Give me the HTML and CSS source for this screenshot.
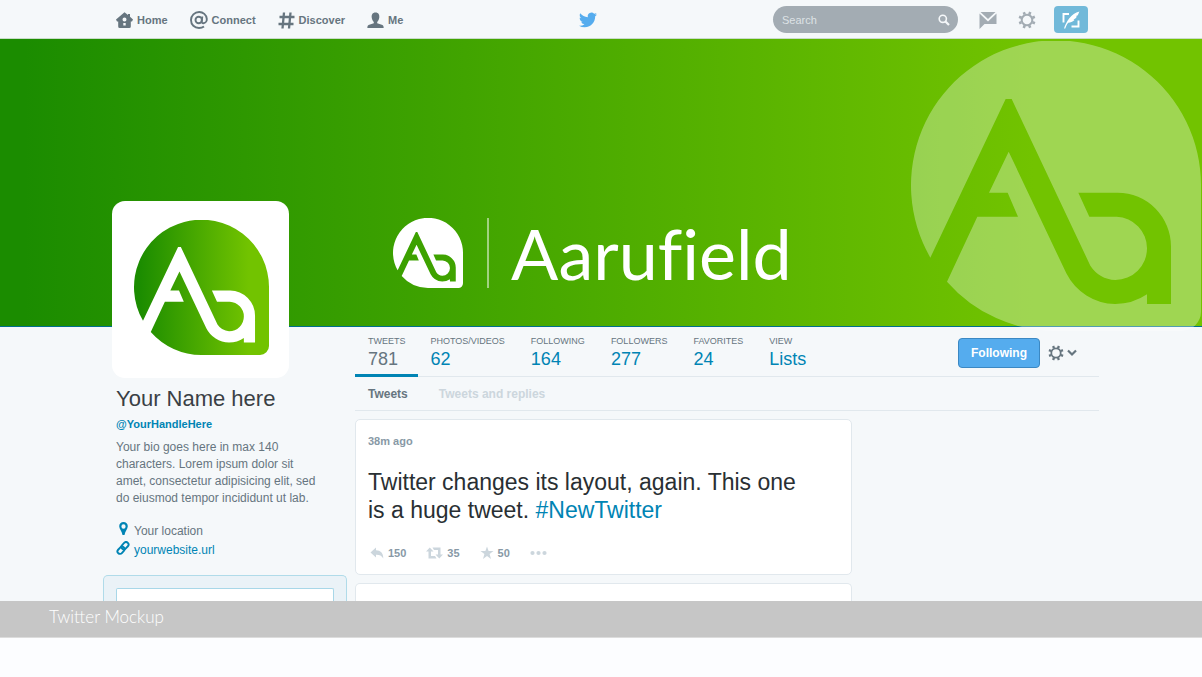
FILE: index.html
```
<!DOCTYPE html>
<html lang="en">

<head>
    <meta charset="UTF-8">
    <meta name="viewport" content="width=device-width, initial-scale=1.0">
    <title>Twitter Mockup</title>
    <link rel="stylesheet" href="styles.css">
</head>

<body>
    <!-- shared shapes -->
    <svg class="defs" width="0" height="0" aria-hidden="true">
        <defs>
            <linearGradient id="green" x1="0" x2="1" y1="0" y2="0">
                <stop offset="0.04" stop-color="#1b8c00" />
                <stop offset="0.85" stop-color="#72c300" />
            </linearGradient>
            <symbol id="mark" viewBox="33 18 870 870">
                <path d="M91 668L317 192H335L571 692A96 96 0 0 0 646 735A95 95 0 0 0 741 640A95 95 0 0 0 650 545H568L535 473H653A160 162 0 0 1 813 635V807H741V778A170 170 0 0 1 645 807A167 167 0 0 1 499 715L326 350L267 473H323L354 545H232L141 740A435 435 0 0 0 468 888H845A58 58 0 0 0 903 830V453A435 435 0 1 0 91 668Z" />
            </symbol>
            <symbol id="gear" viewBox="0 0 18 18">
                <circle cx="9" cy="9" r="5.3" fill="none" stroke="currentColor" stroke-width="2" />
                <path d="M9 0.4V3.2M9 14.8V17.6M0.4 9H3.200M14.8 9H17.6M3 3L4.8 4.8M13.2 13.2L15 15M3 15L4.8 13.2M13.2 4.8L15 3" transform="rotate(22.5 9 9)" fill="none" stroke="currentColor" stroke-width="2.6" />
            </symbol>
        </defs>
    </svg>

    <header class="topbar">
        <div class="wrap topbar-inner">
            <nav class="menu">
                <a href="#"><svg width="17" height="17" viewBox="0 0 17 17"><path fill-rule="evenodd" d="M8.500 0.300L12 3V2H14V4.700L17 7.500L16 9.400H14.800V14.500Q14.800 16 13.300 16H3.700Q2.200 16 2.200 14.500V9.400H1L0 7.500ZM8.500 5.500A2 2 0 0 0 8.500 9.500A2 2 0 0 0 8.500 5.500ZM7.300 11V13.500H9.700V11Z" /></svg>Home</a>
                <a href="#"><svg width="18" height="18" viewBox="0 0 18 18"><g fill="none" stroke="currentColor" stroke-width="1.900"><circle cx="8.700" cy="9" r="3.200" /><path d="M12.300 5.500L11.700 10.500Q11.800 12.300 13.400 12.200C15.500 12 17 10 16.800 7.800C16.500 3.800 13 1 9.200 1C4.600 1 1 4.500 1 9C1 13.800 4.500 17 9 17Q12 17 14 15.500" /></g></svg>Connect</a>
                <a href="#"><svg width="17" height="17" viewBox="0 0 17 17"><path d="M6 0.500L4.500 16.500M12.500 0.500L11 16.500M1.500 5H16.500M0.500 12H15.500" fill="none" stroke="currentColor" stroke-width="2.300" /></svg>Discover</a>
                <a href="#"><svg width="17" height="17" viewBox="0 0 17 17"><path d="M8.500 0.500C11.500 0.500 12.600 2.800 12.300 5.500C12 7.800 11 9.300 10.200 10V11.200L15.500 13Q16.700 13.500 16.700 16H0.300Q0.300 13.500 1.500 13L6.800 11.200V10C6 9.300 5 7.800 4.700 5.500C4.400 2.800 5.500 0.500 8.500 0.500Z" /></svg>Me</a>
            </nav>

            <a class="bird" href="#" aria-label="Twitter">
                <svg width="18" height="18" viewBox="0 0 24 24"><path d="M23.950 4.570a10 10 0 0 1-2.820 0.770 4.960 4.960 0 0 0 2.160-2.720c-0.950 0.550-2 0.960-3.130 1.180a4.920 4.920 0 0 0-8.380 4.480C7.690 8.090 4.070 6.130 1.640 3.160a4.820 4.820 0 0 0-0.670 2.480c0 1.710 0.870 3.210 2.190 4.100a4.900 4.900 0 0 1-2.230-0.620v0.060a4.920 4.920 0 0 0 3.950 4.830 5 5 0 0 1-2.210 0.080 4.940 4.940 0 0 0 4.600 3.420A9.870 9.870 0 0 1 0 19.540a14 14 0 0 0 7.550 2.210c9.050 0 14-7.500 14-13.980 0-0.210 0-0.420-0.020-0.630a9.940 9.940 0 0 0 2.420-2.570Z" /></svg>
            </a>

            <div class="tools">
                <form class="search">
                    <input type="text" placeholder="Search" aria-label="Search">
                    <button type="button" aria-label="Go"><svg width="12" height="12" viewBox="0 0 12 12"><g fill="none" stroke="#f5f8fa" stroke-width="1.600"><circle cx="4.800" cy="4.800" r="3.600" /><path d="M7.500 7.500L11 11" stroke-width="2.200" /></g></svg></button>
                </form>
                <button class="tool" type="button" aria-label="Messages"><svg width="18" height="18" viewBox="0 0 18 18"><path d="M1.500 1H16.500L9 8Z" /><path d="M0.500 2.500L9 10.500L17.500 2.500V13H5.500L0.500 18Z" /></svg></button>
                <button class="tool" type="button" aria-label="Settings"><svg width="18" height="18"><use href="#gear" /></svg></button>
                <button class="compose" type="button" aria-label="Compose"><svg width="18" height="18" viewBox="0 0 18 18"><path d="M7 3H1.500V11.500M9.500 15.500H16.500V9.500" fill="none" stroke="#fff" stroke-width="1.900" /><path d="M2 17.500C4 11 9 2.500 17.500 0.500C16.500 2 16.700 3 15.500 4.500L14 5L14.800 5.700C13.800 7.500 13 8 11.500 8.300L12.500 9C10.500 11 8.500 11.500 6.200 11.800C4.800 13.500 4 15.500 3.300 17.500Z" fill="#fff" /></svg></button>
            </div>
        </div>
    </header>

    <div class="cover">
        <div class="wrap brand">
            <svg class="brand-mark"><use href="#mark" /></svg>
            <span class="brand-line"></span>
            <h1>Aarufield</h1>
        </div>
        <svg class="cover-mark"><use href="#mark" /></svg>
    </div>

    <div class="content">
        <div class="wrap page">
            <aside class="side">
                <div class="avatar">
                    <svg width="135" height="135"><use href="#mark" fill="url(#green)" /></svg>
                </div>
                <div class="profile">
                    <h2>Your Name here</h2>
                    <a class="handle" href="#">@YourHandleHere</a>
                    <p class="bio">Your bio goes here in max 140 characters. Lorem ipsum dolor sit amet, consectetur adipisicing elit, sed do eiusmod tempor incididunt ut lab.</p>
                    <p class="meta"><svg width="14" height="14" viewBox="0 0 14 14"><path fill-rule="evenodd" d="M7.500 0C10 0 11.800 1.800 11.800 4.300C11.800 7 9 9.500 8.500 13H6.500C6 9.500 3.200 7 3.200 4.300C3.200 1.800 5 0 7.500 0ZM7.500 2.200A2.100 2.300 0 0 0 7.500 6.800A2.100 2.300 0 0 0 7.500 2.200Z" /></svg>Your location</p>
                    <p class="meta"><svg width="14" height="14" viewBox="0 0 14 14"><g fill="none" stroke="currentColor" stroke-width="1.900"><rect x="5" y="2.200" width="8" height="5" rx="2.500" transform="rotate(-48 9 4.700)" /><rect x="1" y="6.800" width="8" height="5" rx="2.500" transform="rotate(-48 5 9.300)" /></g></svg><a href="#">yourwebsite.url</a></p>
                </div>
                <div class="panel">
                    <div class="panel-box"></div>
                </div>
            </aside>

            <main class="main">
                <div class="stats">
                    <ul>
                        <li class="current"><a href="#">TWEETS <b>781</b></a></li>
                        <li><a href="#">PHOTOS/VIDEOS <b>62</b></a></li>
                        <li><a href="#">FOLLOWING <b>164</b></a></li>
                        <li><a href="#">FOLLOWERS <b>277</b></a></li>
                        <li><a href="#">FAVORITES <b>24</b></a></li>
                        <li><a href="#">VIEW <b>Lists</b></a></li>
                    </ul>
                    <div class="actions">
                        <button class="follow" type="button">Following</button>
                        <button class="options" type="button" aria-label="Options"><svg width="16" height="16"><use href="#gear" /></svg><svg width="10" height="8" viewBox="0 0 10 8"><path d="M1 1.500L5 5.500L9 1.500" fill="none" stroke="currentColor" stroke-width="2.200" /></svg></button>
                    </div>
                </div>
                <div class="tabs">
                    <a class="current" href="#">Tweets</a>
                    <a href="#">Tweets and replies</a>
                </div>

                <article class="tweet">
                    <time>38m ago</time>
                    <p>Twitter changes its layout, again. This one is a huge tweet. <a href="#">#NewTwitter</a></p>
                    <div class="tweet-actions">
                        <button type="button"><svg width="14" height="12" viewBox="0 0 14 12"><path d="M6 0.500V3.300C10.500 3.300 13.300 6 13.300 11.500C11.500 8.500 9.500 7.700 6 7.800V10.500L0.500 5.500Z" /></svg>150</button>
                        <button type="button"><svg width="17" height="12" viewBox="0 0 17 12"><path d="M3.800 0.500L7.500 4.500H5V9H9L10.500 11.500H2.500V4.500H0ZM6.500 0.500H14.500V7.500H17L13.300 11.500L9.500 7.500H12V3H8Z" /></svg>35</button>
                        <button type="button"><svg width="14" height="14" viewBox="0 0 14 14"><path d="M7 0.500L8.600 5H13.500L9.600 8L11 13L7 10L3 13L4.400 8L0.500 5H5.400Z" /></svg>50</button>
                        <button type="button" aria-label="More"><svg width="17" height="6" viewBox="0 0 17 6"><circle cx="2.500" cy="3" r="2.100" /><circle cx="8.500" cy="3" r="2.100" /><circle cx="14.500" cy="3" r="2.100" /></svg></button>
                    </div>
                </article>
                <article class="tweet tweet-next"></article>
            </main>
        </div>
    </div>

    <footer class="caption">Twitter Mockup</footer>
</body>

</html>
```

FILE: styles.css
```
* {
    box-sizing: border-box;
    margin: 0;
    padding: 0;
}

body {
    background: #fcfdff;
    font-family: "Liberation Sans", Arial, sans-serif;
    font-size: 12px;
    color: #66757f;
}

a {
    color: #0084b4;
    text-decoration: none;
}

ul {
    list-style: none;
}

button {
    border: 0;
    background: none;
    font: inherit;
    color: inherit;
    cursor: pointer;
}

svg {
    display: block;
    flex: none;
    fill: currentColor;
}

.defs {
    position: absolute;
}

.wrap {
    width: 100%;
    max-width: 996px;
    margin: 0 auto;
}

/* top bar */
.topbar {
    background: #f5f8fa;
    border-bottom: 1px solid #c8dcc8;
}

.topbar-inner {
    display: flex;
    align-items: center;
    justify-content: space-between;
    height: 38px;
    padding: 0 11px 0 13px;
}

.menu {
    display: flex;
    gap: 22px;
    padding-top: 2px;
    font-size: 11px;
    font-weight: bold;
}

.menu a {
    display: flex;
    align-items: center;
    gap: 4px;
    color: #66757f;
}

.bird {
    padding-top: 2px;
    color: #55acee;
}

.tools {
    display: flex;
    align-items: center;
    gap: 21px;
    padding-top: 1px;
    color: #a3acb3;
}

.search {
    display: flex;
    align-items: center;
    width: 185px;
    height: 27px;
    padding: 0 8px 0 9px;
    border-radius: 14px;
    background: #a3acb3;
}

.search input {
    flex: 1;
    min-width: 0;
    border: 0;
    outline: 0;
    background: none;
    font-family: inherit;
    font-size: 11px;
    color: #fff;
}

.search input::placeholder {
    color: #dde2e5;
}

.compose {
    display: flex;
    align-items: center;
    justify-content: center;
    width: 34px;
    height: 27px;
    margin-left: -3px;
    border-radius: 4px;
    background: #71b9d9;
}

/* cover */
.cover {
    position: relative;
    height: 288px;
    border-bottom: 1px solid #00708c;
    background: linear-gradient(to right, #1b8c00 2%, #72c300 86%);
    color: #fff;
}

.brand {
    display: flex;
    align-items: center;
    padding: 179px 0 0 290px;
}

.brand-mark {
    width: 70px;
    height: 70px;
}

.brand-line {
    width: 2px;
    height: 70px;
    margin: 0 22px 0 24px;
    background: rgba(255, 255, 255, 0.5);
}

.brand h1 {
    font-family: Lato, sans-serif;
    font-size: 70px;
    font-weight: 400;
    font-variant-ligatures: none;
    line-height: 70px;
}

.cover-mark {
    position: absolute;
    top: 2px;
    right: 1px;
    width: 290px;
    height: 290px;
    opacity: 0.32;
}

/* profile column */
.content {
    background: #f5f8fa;
}

.page {
    display: flex;
}

.side {
    display: flex;
    flex-direction: column;
    flex: none;
    width: 252px;
}

.avatar {
    position: relative;
    width: 177px;
    height: 177px;
    margin: -126px 0 0 9px;
    padding: 19px 20px 23px 22px;
    border-radius: 13px;
    background: #fff;
}

.profile {
    width: 222px;
    padding: 7px 0 15px 13px;
}

.profile h2 {
    font-size: 22px;
    font-weight: 400;
    line-height: 28px;
    color: #3a4045;
}

.handle {
    display: block;
    font-size: 11px;
    font-weight: bold;
    line-height: 22px;
}

.bio {
    margin: 4px 0 15px;
    line-height: 17px;
}

.meta {
    display: flex;
    gap: 4px;
    line-height: 19px;
}

.meta svg {
    color: #0084b4;
}

.panel {
    flex: 1;
    margin-right: 8px;
    padding: 12px;
    padding-bottom: 0;
    border: 1px solid #b0dbe9;
    border-bottom: 0;
    border-radius: 5px 5px 0 0;
    background: #eaf2f7;
}

.panel-box {
    height: 13px;
    border: 1px solid #a8d7e8;
    border-bottom: 0;
    border-radius: 2px 2px 0 0;
    background: #fff;
}

/* timeline */
.main {
    flex: 1;
    min-width: 0;
}

.stats {
    display: flex;
    justify-content: space-between;
    height: 50px;
    border-bottom: 1px solid #e1e8ed;
}

.stats ul {
    display: flex;
}

.stats li {
    height: 50px;
    padding: 9px 13px 0;
    font-size: 9px;
    line-height: 10px;
}

.stats li.current {
    padding-right: 12px;
    border-bottom: 3px solid #0084b4;
}

.stats li a {
    color: #66757f;
}

.stats b {
    display: block;
    font-size: 18px;
    font-weight: 400;
    line-height: 26px;
    color: #0084b4;
}

.stats .current b {
    color: #66757f;
}

.actions {
    display: flex;
    align-items: center;
    gap: 8px;
    padding: 3px 22px 0 0;
}

.follow {
    height: 30px;
    padding: 0 12px;
    border: 1px solid #3b88c3;
    border-radius: 4px;
    background: #55acee;
    font-weight: bold;
    color: #fff;
}

.options {
    display: flex;
    align-items: center;
    gap: 3px;
}

.tabs {
    display: flex;
    gap: 31px;
    padding: 1px 0 0 13px;
    border-bottom: 1px solid #e1e8ed;
    font-weight: bold;
    line-height: 32px;
}

.tabs a {
    color: #ccd6dd;
}

.tabs .current {
    color: #66757f;
}

.tweet {
    max-width: 497px;
    margin-top: 8px;
    padding: 14px 12px;
    border: 1px solid #e1e8ed;
    border-radius: 5px;
    background: #fff;
    color: #8899a6;
}

.tweet time {
    display: block;
    font-size: 11px;
    font-weight: bold;
    line-height: 14px;
}

.tweet p {
    margin: 20px 0 22px;
    padding-right: 24px;
    font-size: 23px;
    line-height: 28px;
    color: #292f33;
}

.tweet-actions {
    display: flex;
    gap: 20px;
    padding-left: 2px;
}

.tweet-actions button {
    display: flex;
    align-items: center;
    gap: 4px;
    height: 14px;
    font-size: 11px;
    font-weight: bold;
}

.tweet-actions svg {
    color: #ccd6dd;
}

.tweet-next {
    height: 18px;
    padding: 0;
    border-bottom: 0;
    border-radius: 5px 5px 0 0;
}

/* bottom caption */
.caption {
    padding: 0 49px 4px;
    border-bottom: 1px solid #dcdcdc;
    background: #c6c6c6;
    font-family: Lato, sans-serif;
    font-size: 17px;
    font-weight: 300;
    line-height: 32px;
    color: #fff;
}
```
